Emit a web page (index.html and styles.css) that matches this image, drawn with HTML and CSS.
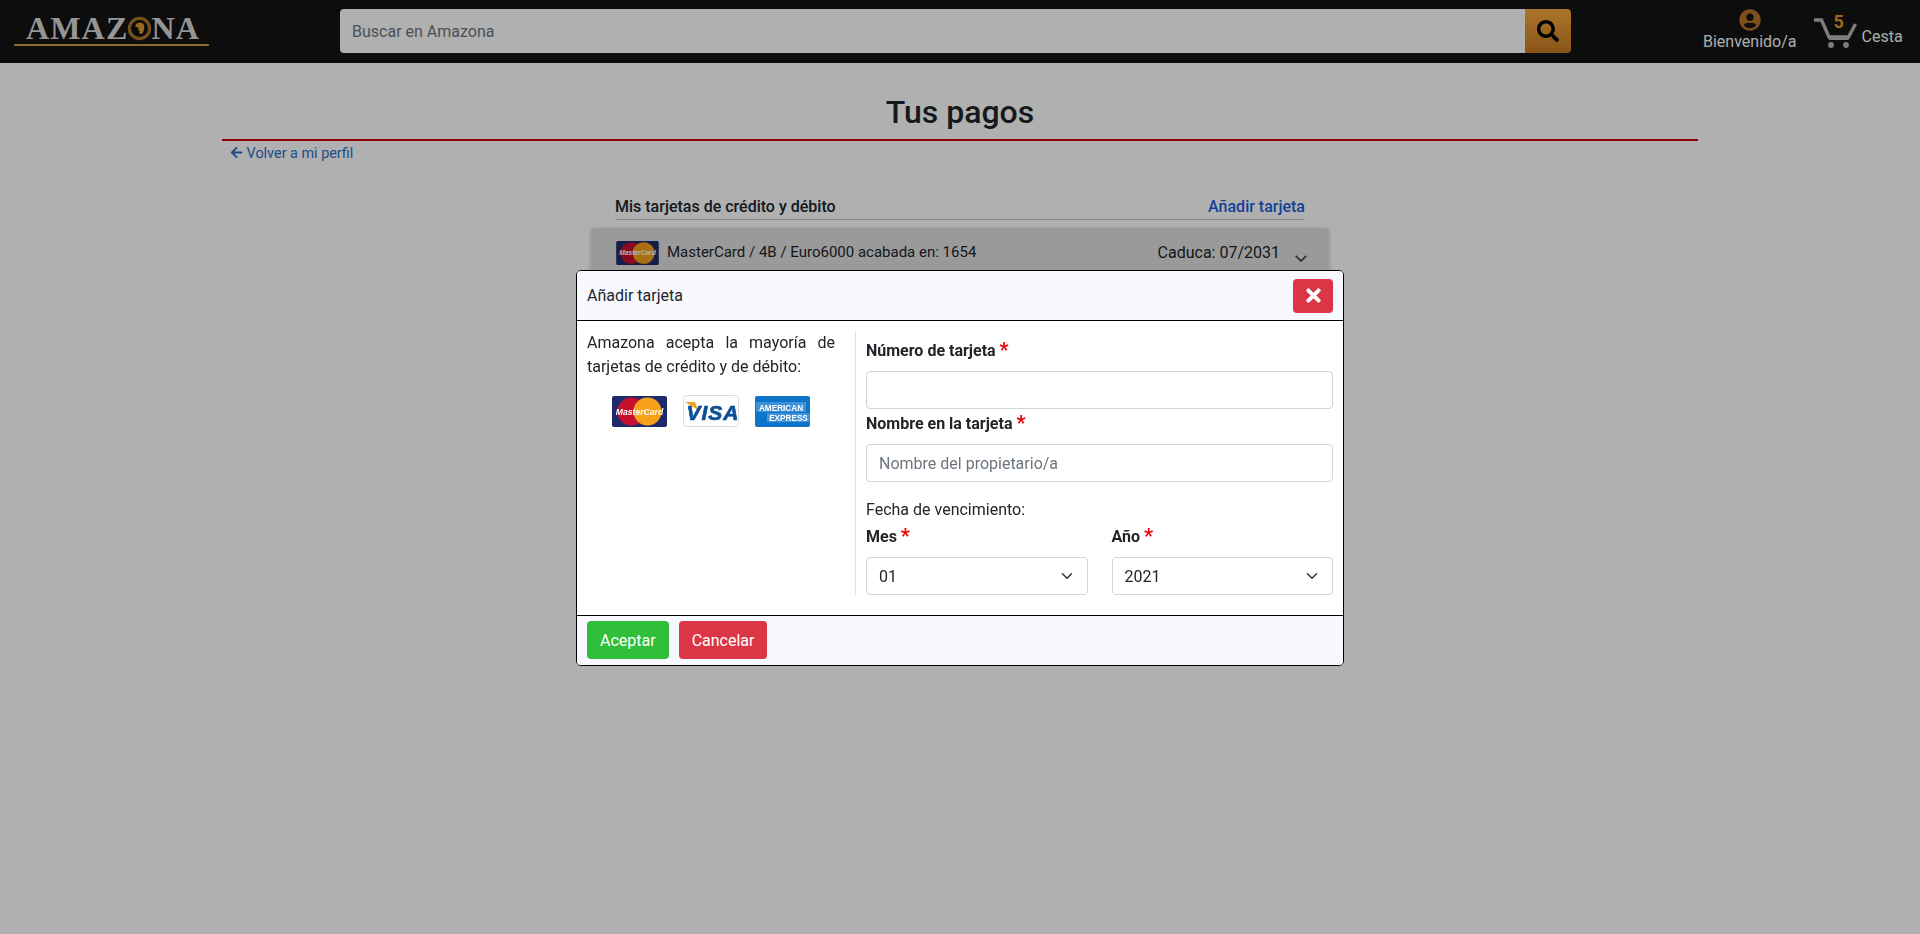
FILE: index.html
```html
<!DOCTYPE html>
<html lang="es">
<head>
<meta charset="utf-8">
<title>Tus pagos</title>
<link rel="stylesheet" href="styles.css">
</head>
<body>
<header class="navbar">
  <a class="logo" href="#">
    <span class="logo-word">AMAZ<svg class="logo-o" viewBox="0 0 26 26" width="25" height="25"><circle cx="13" cy="13" r="10.500" fill="#111" stroke="#a8742a" stroke-width="3.400"/><path d="M8.500 11c.5-3 3-4.500 5.500-4.300 2.800.3 4.300 2.500 4 5.300-.2 2.500-1 4.800-2.500 6.800-1.300-.2-2.500-.8-3-1.800l1-1.500-1.700-.7.3-2.500z" fill="#e0962f"/></svg>NA</span>
  </a>
  <form class="search">
    <input class="search-input" type="text" placeholder="Buscar en Amazona">
    <button class="search-btn" type="button" aria-label="Buscar">
      <svg viewBox="0 0 512 512" width="22" height="22"><path fill="#000" d="M505 442.700L405.300 343c-4.500-4.500-10.600-7-17-7H372c27.600-35.300 44-79.700 44-128C416 93.100 322.900 0 208 0S0 93.100 0 208s93.100 208 208 208c48.300 0 92.700-16.400 128-44v16.300c0 6.400 2.500 12.500 7 17l99.700 99.700c9.400 9.400 24.600 9.400 33.900 0l28.300-28.300c9.400-9.400 9.400-24.600.1-34zM208 336c-70.700 0-128-57.200-128-128 0-70.700 57.200-128 128-128 70.700 0 128 57.200 128 128 0 70.700-57.200 128-128 128z"/></svg>
    </button>
  </form>
  <div class="nav-right">
    <a class="user" href="#">
      <svg viewBox="0 0 496 512" width="22" height="22"><path fill="#b5752a" d="M248 8C111 8 0 119 0 256s111 248 248 248 248-111 248-248S385 8 248 8zm0 96c48.600 0 88 39.400 88 88s-39.400 88-88 88-88-39.400-88-88 39.400-88 88-88zm0 344c-58.700 0-111.300-26.600-146.500-68.200 18.800-35.400 55.600-59.800 98.500-59.800 2.400 0 4.800.4 7.100 1.100 13 4.200 26.600 6.900 40.900 6.900 14.300 0 28-2.700 40.900-6.900 2.300-.7 4.700-1.100 7.100-1.100 42.900 0 79.700 24.400 98.500 59.800C359.300 421.400 306.700 448 248 448z"/></svg>
      <span>Bienvenido/a</span>
    </a>
    <a class="cart" href="#">
      <span class="cart-icon">
        <svg viewBox="0 0 46 32" width="46" height="32"><path d="M1 3h7.500l7.500 17h19.500l7-13" fill="none" stroke="#b5b5b5" stroke-width="3.400"/><path d="M15 20h22l-1.500 3H16z" fill="#b5b5b5"/><circle cx="18" cy="28" r="2.900" fill="#b5b5b5"/><circle cx="33" cy="28" r="2.900" fill="#b5b5b5"/></svg>
        <span class="cart-count">5</span>
      </span>
      <span>Cesta</span>
    </a>
  </div>
</header>

<main class="page">
  <h1 class="title">Tus pagos</h1>
  <a class="back" href="#"><svg viewBox="0 0 448 512" width="13" height="13"><path fill="#2a6fc9" d="M257.500 445.100l-22.200 22.200c-9.400 9.400-24.600 9.400-33.900 0L7 273c-9.400-9.400-9.400-24.600 0-33.900L201.400 44.700c9.400-9.400 24.600-9.400 33.900 0l22.200 22.200c9.500 9.500 9.300 25-.4 34.300L136.600 216H424c13.300 0 24 10.700 24 24v32c0 13.300-10.700 24-24 24H136.600l120.500 114.800c9.800 9.300 10 24.800.4 34.300z"/></svg> Volver a mi perfil</a>
  <section class="cards">
    <div class="cards-head">
      <span class="cards-title">Mis tarjetas de crédito y débito</span>
      <a class="cards-add" href="#">Añadir tarjeta</a>
    </div>
    <div class="card-row">
      <svg class="mc-small" viewBox="0 0 55 31" width="43" height="24"><rect width="55" height="31" rx="2" fill="#1f2a6b"/><circle cx="19.500" cy="15.500" r="14" fill="#c8102e"/><circle cx="35.500" cy="15.500" r="14" fill="#f7a11a"/><text x="27.500" y="18.500" class="mc-text">MasterCard</text></svg>
      <span class="card-name">MasterCard / 4B / Euro6000 acabada en: 1654</span>
      <span class="card-exp">Caduca: 07/2031</span>
      <svg class="card-chevron" viewBox="0 0 16 16" width="14" height="14"><path d="M2 5.500l6 6 6-6" fill="none" stroke="#444" stroke-width="2"/></svg>
    </div>
  </section>
</main>

<div class="overlay"></div>

<div class="modal">
  <div class="modal-head">
    <span>Añadir tarjeta</span>
    <button class="close" type="button" aria-label="Cerrar">
      <svg viewBox="0 0 352 512" width="15" height="21"><path fill="#fff" d="M242.700 256l100.100-100.100c12.300-12.300 12.300-32.200 0-44.500l-22.200-22.200c-12.300-12.300-32.200-12.300-44.500 0L176 189.300 75.900 89.200c-12.300-12.300-32.200-12.300-44.500 0L9.200 111.400c-12.300 12.300-12.300 32.200 0 44.500L109.300 256 9.200 356.100c-12.300 12.300-12.300 32.200 0 44.500l22.200 22.200c12.300 12.300 32.200 12.300 44.500 0L176 322.700l100.100 100.100c12.300 12.300 32.200 12.300 44.500 0l22.200-22.200c12.300-12.300 12.300-32.200 0-44.500L242.700 256z"/></svg>
    </button>
  </div>
  <div class="modal-body">
    <div class="col-info">
      <p class="info-text">Amazona acepta la mayoría de tarjetas de crédito y de débito:</p>
      <div class="brands">
        <svg viewBox="0 0 55 31" width="55" height="31"><rect width="55" height="31" rx="2" fill="#1f2a6b"/><circle cx="19.500" cy="15.500" r="14" fill="#c8102e"/><circle cx="35.500" cy="15.500" r="14" fill="#f7a11a"/><text x="27.500" y="18.500" class="mc-text">MasterCard</text></svg>
        <svg viewBox="0 0 56 32" width="56" height="32"><rect x=".5" y=".5" width="55" height="31" rx="3" fill="#fff" stroke="#d9dde2"/><path d="M2 7h10l3 8z" fill="#f2a11f"/><text x="30" y="24.500" class="visa-text">VISA</text></svg>
        <svg viewBox="0 0 55 31" width="55" height="31"><rect width="55" height="31" rx="2" fill="#0c74c9"/><rect x="1" y="6" width="50" height="10" fill="#3d92d9"/><rect x="12" y="17" width="43" height="9" fill="#3d92d9"/><text x="26" y="14.500" class="amex-text">AMERICAN</text><text x="33.500" y="25" class="amex-text">EXPRESS</text></svg>
      </div>
    </div>
    <form class="col-form">
      <label class="label label-first">Número de tarjeta <span class="req">*</span></label>
      <input class="field" type="text">
      <label class="label label-name">Nombre en la tarjeta <span class="req">*</span></label>
      <input class="field" type="text" placeholder="Nombre del propietario/a">
      <p class="expiry">Fecha de vencimiento:</p>
      <div class="date-row">
        <div class="date-col">
          <label class="label label-date">Mes <span class="req">*</span></label>
          <select class="field select"><option>01</option></select>
        </div>
        <div class="date-col">
          <label class="label label-date">Año <span class="req">*</span></label>
          <select class="field select"><option>2021</option></select>
        </div>
      </div>
    </form>
  </div>
  <div class="modal-foot">
    <button class="btn btn-ok" type="button">Aceptar</button>
    <button class="btn btn-cancel" type="button">Cancelar</button>
  </div>
</div>
</body>
</html>
```
FILE: styles.css
```css
* { box-sizing: border-box; }
html, body { height: 100%; }
body {
  margin: 0;
  background: #fff;
  color: #212529;
  font-family: Roboto, "Liberation Sans", sans-serif;
  font-size: 16px;
  line-height: 1.5;
  overflow: hidden;
}
a { text-decoration: none; color: inherit; }

.navbar {
  height: 63px;
  background: #141414;
  display: flex;
  align-items: flex-start;
}
.logo {
  width: 195px;
  margin: 12px 0 0 14px;
  height: 34px;
  border-bottom: 2px solid #cc9a40;
  display: flex;
  justify-content: center;
  padding-left: 3px;
}
.logo-word {
  font-family: "Liberation Serif", serif;
  font-weight: 700;
  font-size: 32px;
  line-height: 30px;
  letter-spacing: 1.200px;
  color: #d8d8d8;
  display: flex;
  align-items: center;
  height: 32px;
}
.logo-o { margin: 0 -1px; }
.search {
  display: flex;
  width: 1231px;
  height: 44px;
  margin: 9px 0 0 131px;
}
.search-input {
  flex: 1;
  min-width: 0;
  border: 0;
  background: #fff;
  border-radius: 4px 0 0 4px;
  padding: 0 12px;
  font: 16px Roboto, sans-serif;
}
.search-input::placeholder { color: #6c757d; opacity: 1; }
.search-btn {
  width: 46px;
  border: 0;
  padding: 0;
  border-radius: 0 4px 4px 0;
  background: linear-gradient(#f7ab3f, #c67a24);
  display: flex;
  align-items: center;
  justify-content: center;
}
.nav-right {
  margin-left: 132px;
  display: flex;
  color: #f8f9fa;
}
.user {
  display: flex;
  flex-direction: column;
  align-items: center;
  padding-top: 9px;
  line-height: 24px;
}
.user svg { display: block; margin-bottom: 0; }
.user span { margin-top: -1px; }
.cart {
  display: flex;
  align-items: flex-start;
  margin-left: 16px;
  padding-top: 17px;
  line-height: 24px;
}
.cart-icon { position: relative; width: 46px; height: 32px; display: block; margin-right: 3px; }
.cart-icon svg { display: block; }
.cart-count {
  position: absolute;
  left: 21px;
  top: -4px;
  color: #e8962e;
  font-weight: 700;
  font-size: 18px;
  line-height: 18px;
}
.cart > span:last-child { margin-top: 8px; }

.page {
  width: 1476px;
  margin: 0 auto;
}
.title {
  margin: 0;
  padding-top: 27px;
  height: 78px;
  border-bottom: 2px solid #c00;
  text-align: center;
  font-size: 32px;
  font-weight: 500;
  line-height: 44px;
}
.back {
  display: block;
  margin: 2px 0 0 8px;
  font-size: 14.400px;
  line-height: 21px;
  color: #2a6fc9;
}
.back svg { vertical-align: -1px; }
.cards { width: 738px; margin: 26px auto 0; }
.cards-head {
  margin: 0 24px;
  height: 30px;
  padding-top: 4px;
  display: flex;
  justify-content: space-between;
  align-items: center;
  border-bottom: 1px solid #ccc;
  font-weight: 500;
  font-size: 16px;
}
.cards-add { color: #1b5fe0; }
.card-row {
  margin-top: 8px;
  height: 50px;
  background: #e0e0e0;
  border-radius: 4px;
  box-shadow: 0 1px 4px rgba(0,0,0,.2);
  display: flex;
  align-items: flex-start;
  padding: 13px 18px 0 25px;
  font-size: 15px;
}
.card-name { margin-left: 8px; font-size: 15px; }
.card-exp { margin-left: auto; font-size: 16px; }
.card-chevron { margin: 10px 3px 0 14px; }
.mc-small { display: block; }
.mc-text { font: italic 700 8.600px "Liberation Sans", sans-serif; fill: #fff; text-anchor: middle; }
.visa-text { font: italic 700 21px "Liberation Sans", sans-serif; fill: #0b4f96; stroke: #0b4f96; stroke-width: .7px; letter-spacing: 1px; text-anchor: middle; }
.amex-text { font: 700 8.200px "Liberation Sans", sans-serif; fill: #fff; text-anchor: middle; }

.overlay {
  position: fixed;
  inset: 0;
  background: rgba(0,0,0,.31);
}
.modal {
  position: fixed;
  top: 270px;
  left: 576px;
  width: 768px;
  height: 396px;
  border: 1px solid #000;
  border-radius: 5px;
  background: #fff;
  display: flex;
  flex-direction: column;
  overflow: hidden;
}
.modal-head {
  height: 50px;
  background: #f8f9ff;
  border-bottom: 1px solid #000;
  display: flex;
  justify-content: space-between;
  align-items: center;
  padding: 0 10px;
  font-size: 16px;
}
.close {
  width: 40px;
  height: 34px;
  margin-top: 0;
  border: 0;
  border-radius: 4px;
  background: #dc3545;
  padding: 0;
  display: flex;
  align-items: center;
  justify-content: center;
}
.modal-body {
  flex: 1;
  display: flex;
  padding: 10px 10px 0;
}
.col-info {
  width: 269px;
  height: 264px;
  padding-right: 20px;
  border-right: 1px solid #dee2e6;
  font-size: 16px;
}
.info-text { margin: 0; text-align: justify; line-height: 24px; }
.brands {
  display: flex;
  justify-content: center;
  align-items: center;
  gap: 16px;
  margin-top: 16px;
}
.col-form { flex: 1; padding-left: 10px; }
.label { display: block; font-weight: 700; font-size: 16px; line-height: 24px; }
.label-first { margin: 8px 0 8px; }
.label-name { margin: 3px 0 8px; }
.req { color: #e00; font-size: 20px; font-weight: 700; line-height: 20px; vertical-align: -1px; }
.field {
  display: block;
  width: 100%;
  height: 38px;
  border: 1px solid #ced4da;
  border-radius: 4px;
  background: #fff;
  padding: 0 12px;
  font: 16px Roboto, sans-serif;
  color: #212529;
}
.field::placeholder { color: #6c757d; opacity: 1; }
.expiry { margin: 16px 0 0; font-size: 16px; line-height: 24px; }
.date-row { display: flex; gap: 24px; }
.date-col { flex: 1; }
.label-date { margin: 3px 0 8px; }
.select {
  appearance: none;
  background-image: url("data:image/svg+xml,%3Csvg xmlns='http://www.w3.org/2000/svg' viewBox='0 0 16 16'%3E%3Cpath fill='none' stroke='%23343a40' stroke-width='2' stroke-linecap='round' stroke-linejoin='round' d='M2 5l6 6 6-6'/%3E%3C/svg%3E");
  background-repeat: no-repeat;
  background-position: right 12px center;
  background-size: 16px 12px;
}
.modal-foot {
  height: 50px;
  background: #f8f9ff;
  border-top: 1px solid #000;
  display: flex;
  gap: 10px;
  padding: 5px 10px;
}
.btn {
  height: 38px;
  border: 0;
  border-radius: 4px;
  padding: 0 13px;
  color: #fff;
  font: 16px Roboto, sans-serif;
}
.btn-ok { background: #2fbf3a; }
.btn-cancel { background: #dc3545; }
```
